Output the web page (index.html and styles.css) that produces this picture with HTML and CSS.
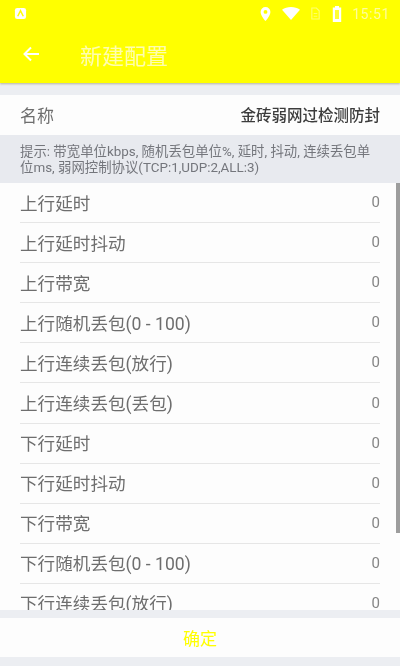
FILE: index.html
```html
<!DOCTYPE html>
<html lang="zh">
<head>
<meta charset="utf-8">
<title>新建配置</title>
<link rel="stylesheet" href="styles.css">
</head>
<body>
<div class="app">
  <header class="appbar">
    <div class="statusbar">
      <svg class="st-app" viewBox="0 0 14 14"><rect x="1" y="1" width="12" height="12" rx="2.5" fill="#fff"/><path d="M4 10 7 4l3 6" fill="none" stroke="#ff0" stroke-width="1.6"/></svg>
      <span class="st-right">
        <svg class="st-pin" viewBox="0 0 12 16"><path d="M6 0a5.6 5.6 0 0 0-5.6 5.6C.4 9.8 6 16 6 16s5.600-6.200 5.600-10.400A5.600 5.600 0 0 0 6 0Zm0 7.800a2.200 2.200 0 1 1 0-4.400 2.200 2.200 0 0 1 0 4.400Z" fill="#fff"/></svg>
        <svg class="st-wifi" viewBox="0 0 18 13"><path d="M0 2.800C2.500 1 5.600 0 9 0s6.500 1 9 2.800L9 13Z" fill="#fff"/></svg>
        <svg class="st-sim" viewBox="0 0 12 14"><path d="M2 1h5l3 3v9H2Z" fill="none" stroke="#fff" stroke-opacity=".55" stroke-width="1.200"/><path d="M4 7h4M4 10h4" stroke="#fff" stroke-opacity=".55"/></svg>
        <svg class="st-batt" viewBox="0 0 10 16"><path d="M3 0h4v1.500h2.200V16H.8V1.500H3Z" fill="#fff"/><rect x="3" y="4" width="4" height="9" fill="#ff0" opacity=".8"/></svg>
        <span class="st-time">15:51</span>
      </span>
    </div>
    <div class="toolbar">
      <svg class="back" viewBox="0 0 18 18"><path d="M17 9H3M9 2.500 2.500 9 9 15.500" fill="none" stroke="#fff" stroke-width="2"/></svg>
      <h1 class="title">新建配置</h1>
    </div>
  </header>

  <div class="name-row">
    <span class="name-label">名称</span>
    <span class="name-value">金砖弱网过检测防封</span>
  </div>
  <p class="hint">提示: 带宽单位kbps, 随机丢包单位%, 延时, 抖动, 连续丢包单位ms, 弱网控制协议(TCP:1,UDP:2,ALL:3)</p>

  <div class="list">
    <div class="scrollbar"></div>
    <div class="row"><span>上行延时</span><span class="val">0</span></div>
    <div class="row"><span>上行延时抖动</span><span class="val">0</span></div>
    <div class="row"><span>上行带宽</span><span class="val">0</span></div>
    <div class="row"><span>上行随机丢包(0 - 100)</span><span class="val">0</span></div>
    <div class="row"><span>上行连续丢包(放行)</span><span class="val">0</span></div>
    <div class="row"><span>上行连续丢包(丢包)</span><span class="val">0</span></div>
    <div class="row"><span>下行延时</span><span class="val">0</span></div>
    <div class="row"><span>下行延时抖动</span><span class="val">0</span></div>
    <div class="row"><span>下行带宽</span><span class="val">0</span></div>
    <div class="row"><span>下行随机丢包(0 - 100)</span><span class="val">0</span></div>
    <div class="row"><span>下行连续丢包(放行)</span><span class="val">0</span></div>
  </div>

  <div class="confirm-wrap"><button class="confirm">确定</button></div>
</div>
</body>
</html>
```
FILE: styles.css
```css
html, body { margin: 0; padding: 0; }
body {
  width: 400px;
  height: 666px;
  overflow: hidden;
  background: #eceef2;
  font-family: "Roboto", "Noto Sans CJK SC", sans-serif;
}
.app {
  display: flex;
  flex-direction: column;
  height: 666px;
  filter: blur(0.6px);
}
.appbar {
  flex: none;
  height: 83px;
  background: #ffff00;
  box-shadow: 0 1px 2px rgba(120, 110, 60, 0.45);
  position: relative;
  z-index: 2;
}
.statusbar {
  height: 27px;
  display: flex;
  align-items: center;
  justify-content: space-between;
  padding: 0 10px 0 14px;
}
.st-app { width: 13px; height: 13px; }
.st-right { display: flex; align-items: center; }
.st-pin { width: 11px; height: 14px; margin-right: 11px; }
.st-wifi { width: 18px; height: 13px; margin-right: 10px; }
.st-sim { width: 11px; height: 13px; margin-right: 11px; opacity: .8; }
.st-batt { width: 10px; height: 16px; margin-right: 10px; }
.st-time { color: #fffc9c; font-size: 14px; letter-spacing: .6px; }
.toolbar {
  height: 56px;
  display: flex;
  align-items: center;
  padding-left: 22px;
}
.back { width: 18px; height: 18px; margin-bottom: 3px; }
.title {
  margin: 0 0 3px 40px;
  color: #fffdb0;
  font-size: 22px;
  font-weight: 400;
}
.name-row {
  flex: none;
  height: 40px;
  margin-top: 12px;
  background: #fdfdfd;
  display: flex;
  align-items: center;
  justify-content: space-between;
  padding: 0 20px 2px;
  box-sizing: border-box;
}
.name-label { font-size: 17px; color: #6e6e6e; }
.name-value { font-size: 15.5px; font-weight: 500; color: #3c3c3c; }
.hint {
  flex: none;
  height: 48px;
  margin: 0;
  padding: 9px 20px 0;
  box-sizing: border-box;
  background: #e8eaef;
  color: #74767c;
  font-size: 13.4px;
  line-height: 16px;
}
.list {
  flex: none;
  height: 427px;
  overflow: hidden;
  position: relative;
  background: #fdfdfd;
}
.scrollbar {
  position: absolute;
  top: 0;
  right: 0;
  width: 4px;
  height: 350px;
  background: #9d9d9d;
}
.row {
  height: 40.1px;
  margin: 0 20px;
  padding-bottom: 1px;
  box-sizing: border-box;
  border-bottom: 1px solid #e6e6e6;
  display: flex;
  align-items: center;
  justify-content: space-between;
  font-size: 17.6px;
  color: #6e6e6e;
}
.val { font-size: 15px; color: #858585; }
.confirm-wrap {
  flex: none;
  margin-top: 8px;
  height: 39px;
  background: #fdfdfd;
}
.confirm {
  display: block;
  width: 100%;
  height: 100%;
  border: 0;
  padding: 0;
  background: transparent;
  color: #ffff00;
  font: inherit;
  font-size: 17px;
}
```
